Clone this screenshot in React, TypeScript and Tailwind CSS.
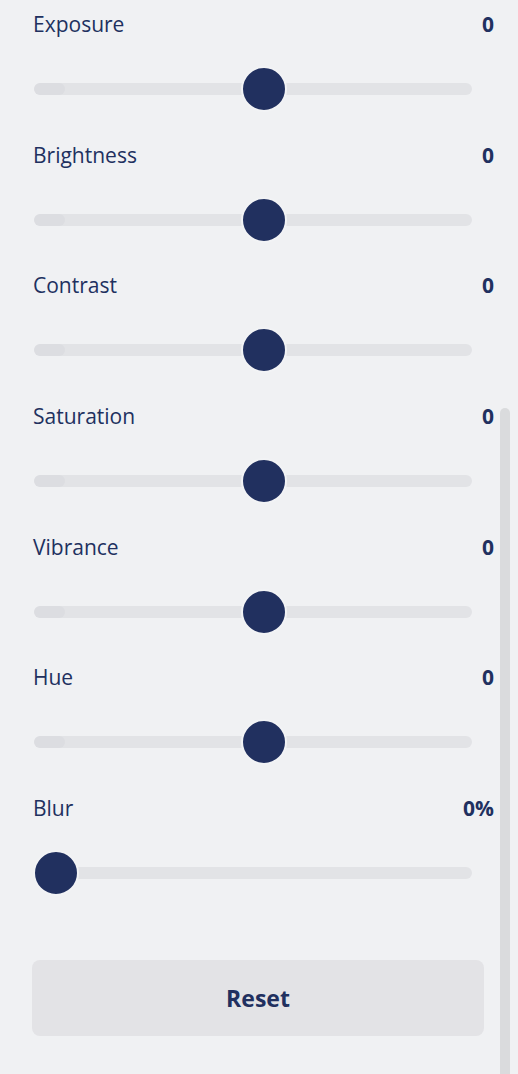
import React from "react";

const rows = [
  { label: "Exposure", value: "0", pos: 264 },
  { label: "Brightness", value: "0", pos: 264 },
  { label: "Contrast", value: "0", pos: 264 },
  { label: "Saturation", value: "0", pos: 264 },
  { label: "Vibrance", value: "0", pos: 264 },
  { label: "Hue", value: "0", pos: 264 },
  { label: "Blur", value: "0%", pos: 56 },
];

function Slider({ pos }: { pos: number }) {
  return (
    <div className="relative ml-[34px] w-[438px] h-[44px] flex items-center">
      <div className="w-full h-[12px] rounded-full bg-[#e2e3e6] overflow-hidden flex">
        <div className="w-[31px] h-full bg-[#dcdde1] rounded-full" />
      </div>
      <div
        className="absolute top-[0px] w-[46px] h-[46px] -mt-[1px] rounded-full bg-[#21305f] border-[2px] border-[#f2f3f5]"
        style={{ left: pos - 34 - 23 }}
      />
    </div>
  );
}

export default function App() {
  return (
    <div
      className="relative w-[518px] h-[1074px] bg-[#f0f1f3] overflow-hidden text-[#21305f]"
      style={{ fontFamily: '"Open Sans", "Noto Sans", sans-serif' }}
    >
      <div className="absolute right-[8px] top-[408px] w-[10px] h-[700px] rounded-full bg-[#dadbdd]" />
      <div className="relative flex flex-col pt-[10px] gap-[29.67px]">
        {rows.map((r) => (
          <div key={r.label} className="flex flex-col">
            <div className="flex justify-between items-center h-[28px] pl-[33px] pr-[24px]">
              <span className="text-[21px] leading-[28px]">{r.label}</span>
              <span className="text-[21px] font-bold leading-[28px]">{r.value}</span>
            </div>
            <div className="mt-[29px]">
              <Slider pos={r.pos} />
            </div>
          </div>
        ))}
      </div>
      <div className="relative mt-[65px] ml-[32px] w-[452px] h-[76px] rounded-[8px] bg-[#e3e3e6] flex items-center justify-center">
        <span className="text-[23px] font-bold">Reset</span>
      </div>
    </div>
  );
}
